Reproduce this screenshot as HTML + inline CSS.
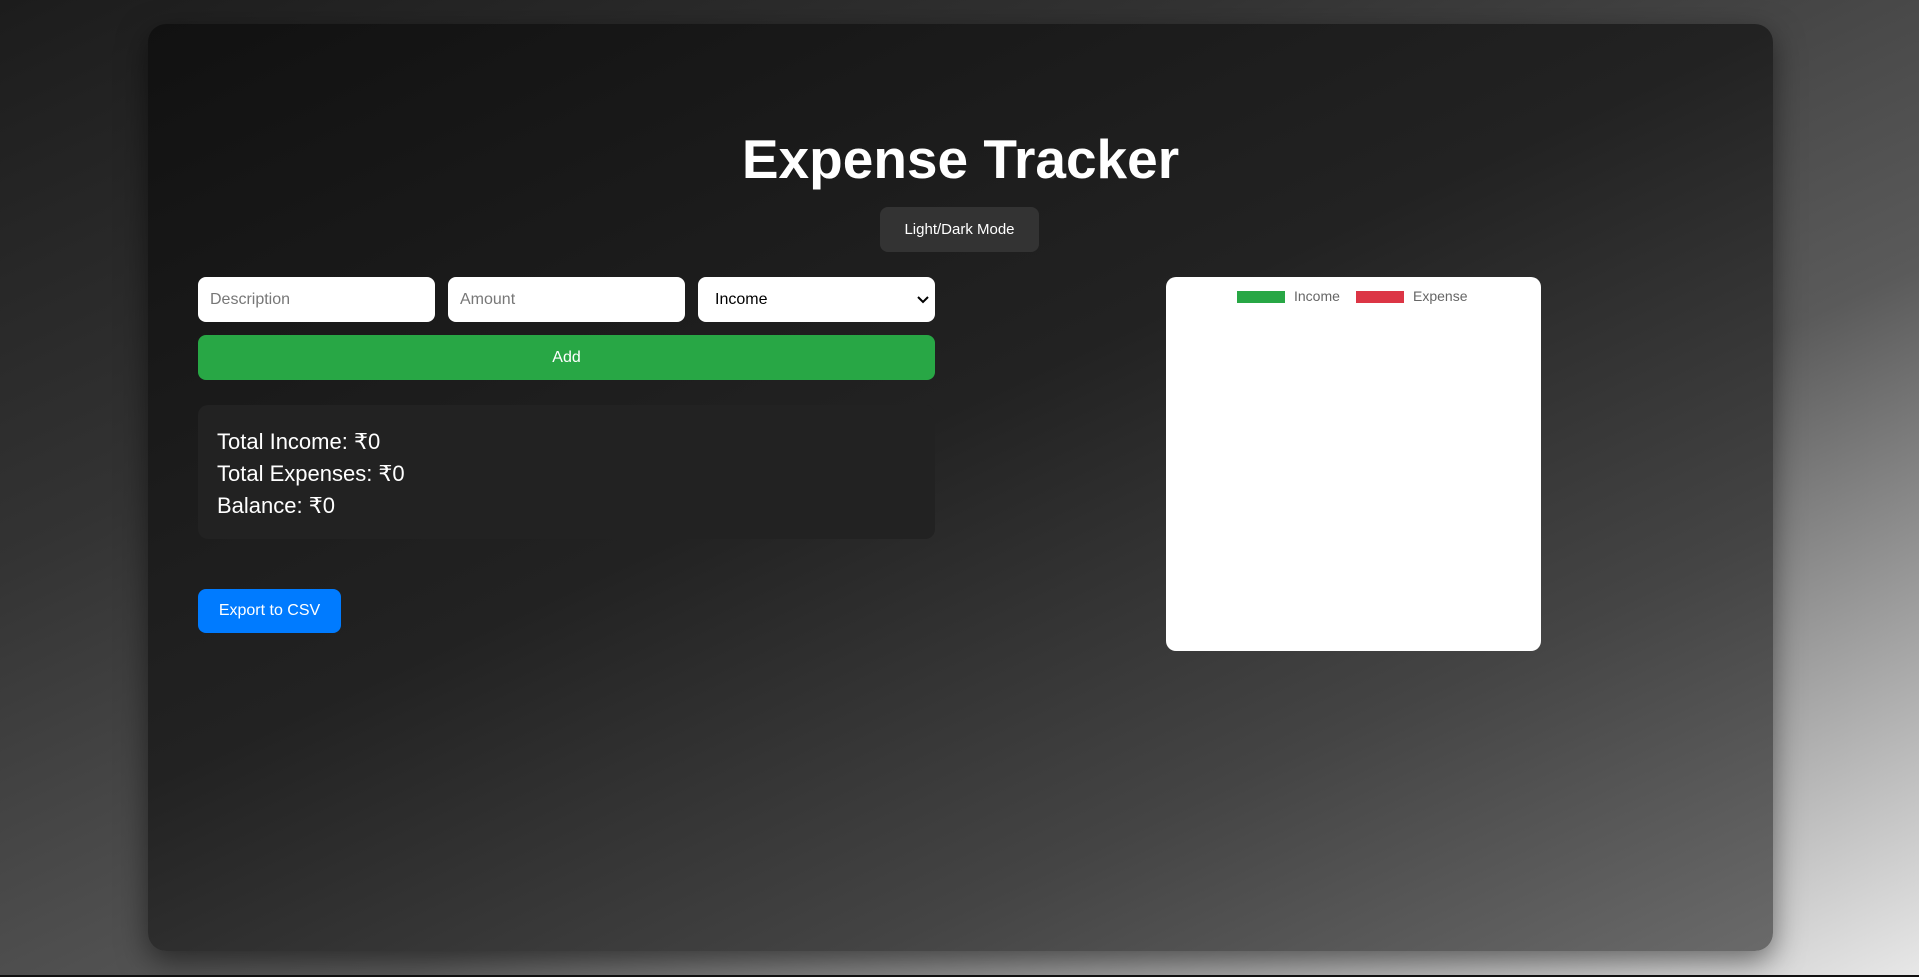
<!DOCTYPE html>
<html><head><meta charset="utf-8"><style>
*{box-sizing:border-box;margin:0;padding:0}
html,body{width:1919px;height:977px;overflow:hidden}
body{background:linear-gradient(155deg,#1c1c1c 0%,#333 30%,#5a5a5a 62%,#e8e8e8 100%);font-family:"Liberation Sans",sans-serif;position:relative}
.bl{position:absolute;left:0;right:0;bottom:0;height:2px;background:#111}
.c{position:absolute;left:148px;top:24px;width:1625px;height:927px;border-radius:18px;background:linear-gradient(155deg,#111 0%,#222 45%,#444 75%,#6a6a6a 100%);box-shadow:0 10px 30px rgba(0,0,0,.5)}
h1{position:absolute;left:0;right:0;top:100px;text-align:center;color:#fff;font-size:55px;font-weight:bold;line-height:70px}
.t{position:absolute;left:732px;top:183px;width:159px;height:45px;background:#333;border-radius:8px;color:#fff;font-size:15px;text-align:center;line-height:45px}
.in{position:absolute;top:253px;height:45px;width:237px;background:#fff;border-radius:8px;font-size:16px;line-height:45px;padding-left:12px;color:#777}
.add{position:absolute;left:50px;top:311px;width:737px;height:45px;background:#28a745;border-radius:8px;color:#fff;font-size:16px;text-align:center;line-height:45px}
.sum{position:absolute;left:50px;top:381px;width:737px;height:134px;background:#222;border-radius:10px;padding:21px 19px;color:#fff;font-size:22px;line-height:32px}
.exp{position:absolute;left:50px;top:565px;width:143px;height:44px;background:#007bff;border-radius:8px;color:#fff;font-size:16px;text-align:center;line-height:44px}
.ch{position:absolute;left:1018px;top:253px;width:375px;height:374px;background:#fff;border-radius:10px}
.lg{position:absolute;top:14px;height:12px}
.lt{position:absolute;top:11px;font-size:14px;color:#666}
</style></head><body>
<div class="c">
<h1>Expense Tracker</h1>
<div class="t">Light/Dark Mode</div>
<div class="in" style="left:50px">Description</div>
<div class="in" style="left:300px">Amount</div>
<div class="in" style="left:550px;color:#000;padding-left:17px">Income<svg style="position:absolute;right:6px;top:18px" width="12" height="9" viewBox="0 0 12 9"><path d="M1 2l5 5 5-5" stroke="#000" stroke-width="2" fill="none"/></svg></div>
<div class="add">Add</div>
<div class="sum">Total Income: ₹0<br>Total Expenses: ₹0<br>Balance: ₹0</div>
<div class="exp">Export to CSV</div>
<div class="ch">
<div class="lg" style="left:71px;width:48px;background:#28a745"></div>
<div class="lt" style="left:128px">Income</div>
<div class="lg" style="left:190px;width:48px;background:#dc3545"></div>
<div class="lt" style="left:247px">Expense</div>
</div>
</div>
<div class="bl"></div>
</body></html>
